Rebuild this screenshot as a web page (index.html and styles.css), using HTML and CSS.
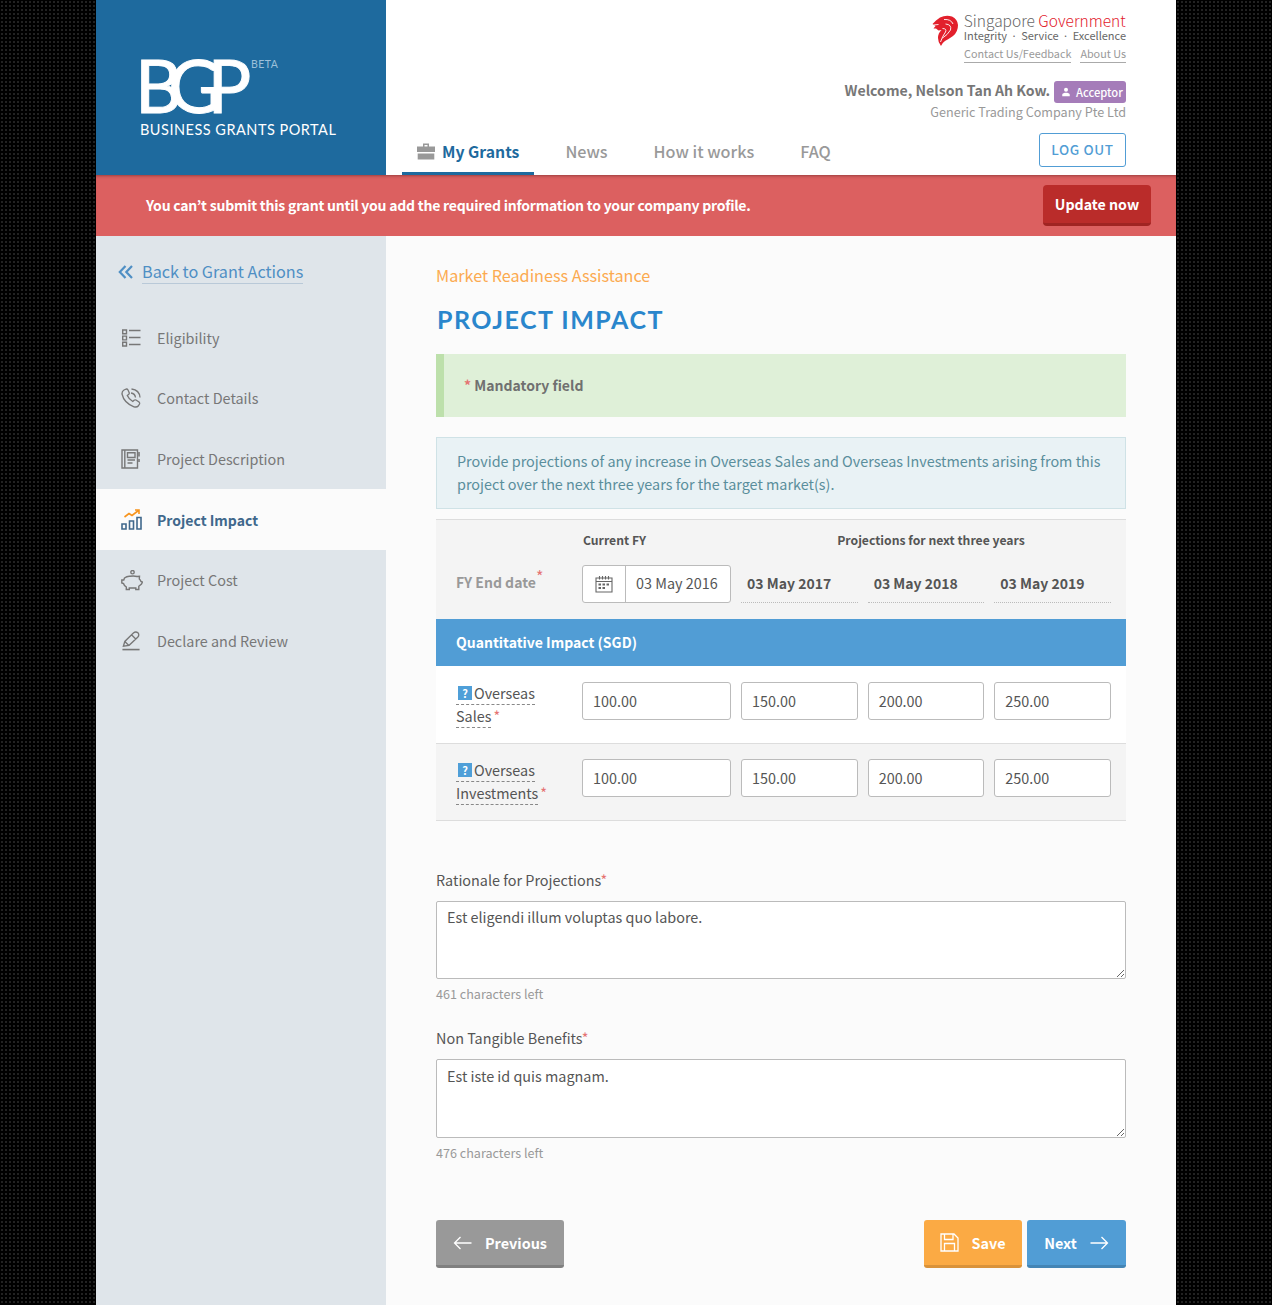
FILE: index.html
```html
<!DOCTYPE html>
<html lang="en">
<head>
<meta charset="utf-8">
<title>Project Impact</title>
<link rel="stylesheet" href="styles.css">
</head>
<body>
<div class="shell">
  <header class="header">
    <div class="brand">
      <div class="brand-mark"><span class="brand-bgp">BGP</span><span class="brand-beta">BETA</span></div>
      <div class="brand-name">BUSINESS GRANTS PORTAL</div>
    </div>
    <div class="header-main">
      <div class="gov">
        <svg class="lion" viewBox="0 0 26 31"><path fill="#e2202c" d="M0.500 9 L4 5.500 L8 2.500 Q14 -0.500 20 1.500 Q25.500 4 26 10 Q26 17 21 21 Q16 24.500 13 26 Q10 28 9 31 Q6 27.500 6 23 Q6 18 9.500 15 L6.500 15.500 L4 13.500 L1.500 13.500 L3.500 11 Z"/><path fill="none" stroke="#fff" stroke-width=".9" d="M1.500 10 L6.500 9.500 M12 4.500 Q19 4 21 9 M13.500 9 Q20 9.500 18.500 15 Q15.500 20 10.500 23 M10.500 13.500 Q15 13.500 13.500 17 Q10.500 21 8.500 27"/></svg>
        <div class="gov-text">
          <div class="gov-title">Singapore <span class="gov-red">Government</span></div>
          <div class="gov-sub">Integrity · Service · Excellence</div>
        </div>
      </div>
      <div class="gov-links"><a class="gov-link">Contact Us/Feedback</a><a class="gov-link">About Us</a></div>
      <div class="welcome">
        <span class="welcome-name">Welcome, Nelson Tan Ah Kow.</span>
        <span class="role"><svg class="role-icon" viewBox="0 0 12 12"><circle cx="6" cy="3.4" r="2.4" fill="#fff"/><path fill="#fff" d="M1.5 11 V9.2 C1.5 7.6 4 6.9 6 6.9 S10.500 7.600 10.500 9.200 V11Z"/></svg>Acceptor</span>
      </div>
      <div class="company">Generic Trading Company Pte Ltd</div>
      <div class="nav-row">
        <nav class="nav">
          <a class="nav-item nav-active"><svg class="nav-icon" viewBox="0 0 18 17"><path fill="#999" d="M6 0.500 H12 V3.500 H18 V9 H0 V3.500 H6Z M7.500 2 V3.500 H10.500 V2Z M0.700 10.500 H17.300 V16.500 H0.700Z" fill-rule="evenodd"/></svg>My Grants</a>
          <a class="nav-item">News</a>
          <a class="nav-item">How it works</a>
          <a class="nav-item">FAQ</a>
        </nav>
        <a class="logout">LOG OUT</a>
      </div>
    </div>
  </header>
  <div class="alert">
    <span class="alert-text">You can’t submit this grant until you add the required information to your company profile.</span>
    <a class="alert-btn">Update now</a>
  </div>
  <div class="body">
    <aside class="side">
      <a class="back"><svg class="back-icon" viewBox="0 0 15 14"><path fill="none" stroke="#4f8fc4" stroke-width="2.200" d="M7.500 1 L1.800 7 L7.500 13 M14 1 L8.300 7 L14 13"/></svg><span class="back-text">Back to Grant Actions</span></a>
      <ul class="steps">
        <li class="step"><svg class="step-icon" viewBox="0 0 20 20" fill="none" stroke="#777" stroke-width="1.400"><path d="M1.700 2h3.800v3.800h-3.800zM1.700 8.100h3.800v3.800h-3.800zM1.700 14.200h3.800v3.800h-3.800z"/><path d="M8 2.500H19.500M8 9.500H19.500M8 16.500H19.500"/></svg>Eligibility</li>
        <li class="step"><svg class="step-icon" viewBox="0 0 20 20" fill="none" stroke="#777" stroke-width="1.300"><path d="M3 2 L5.500 1 Q6.500 1 7 2 L8.200 4.800 Q8.500 5.800 7.500 6.500 L6.300 7.400 Q7.800 11 11.800 13.500 L13 12.200 Q14 11.500 15 12 L18 14 Q19 15 18.500 16 L17.200 18 Q16 19.500 13 18.800 Q3 15 1 6 Q0.800 3.500 3 2Z"/><path d="M10 5 Q14 5.500 14.500 9.500 M10.500 1 Q18.500 2 19 9.500"/></svg>Contact Details</li>
        <li class="step"><svg class="step-icon" viewBox="0 0 20 20" fill="none" stroke="#777" stroke-width="1.400"><path d="M1 1h15.500v18h-15.500zM3.800 1v18"/><path d="M6.500 3.800h7.500v4.700h-7.500zM6.500 11h7.500M6.500 14h5"/><path d="M18 3v4.500M18 10v3" stroke-width="1.600"/></svg>Project Description</li>
        <li class="step step-active"><svg class="step-icon step-icon-wide" viewBox="0 0 22 21" fill="none"><path stroke="#f7941d" stroke-width="1.600" d="M3.500 8 L8 4.500 L11 6.500 L17.500 1.500 M14 1 H18 V5"/><path stroke="#40688c" stroke-width="1.600" d="M1 15h4v5h-4zM8.500 12h4v8h-4zM16 8.500h4v11.500h-4z"/></svg>Project Impact</li>
        <li class="step"><svg class="step-icon step-icon-wide" viewBox="0 0 22 21" fill="none" stroke="#777" stroke-width="1.400"><circle cx="11.500" cy="2.200" r="1.700"/><path d="M3.500 8 Q6 6 9 6.300 Q13 5.700 16 6.500 L18.500 6.300 L18.300 9 Q19.500 10 20 11.500 L21.500 12 L20.500 14 L17.800 16.300 V19.500 H14.800 V18 H8.300 V19.500 H5.300 V17 Q3 15.500 2.500 13.500 L0.800 13 V10 H2.800Z"/></svg>Project Cost</li>
        <li class="step"><svg class="step-icon" viewBox="0 0 20 21" fill="none" stroke="#777" stroke-width="1.400"><path d="M2 16 L3.500 11 L12.500 2 Q15 0 17.500 2 Q19 4.500 17 6.500 L8 15 Z M3.500 11 L7.500 15 M10.500 4 L15 8.500"/><path d="M1 19.500H19" stroke-width="1.700"/></svg>Declare and Review</li>
      </ul>
    </aside>
    <main class="main">
      <div class="eyebrow">Market Readiness Assistance</div>
      <h1 class="title">PROJECT IMPACT</h1>
      <div class="mandatory"><span class="req">*</span> Mandatory field</div>
      <div class="info">Provide projections of any increase in Overseas Sales and Overseas Investments arising from this project over the next three years for the target market(s).</div>
      <section class="table">
        <div class="grid grid-head">
          <div></div>
          <div class="col-head col-current">Current FY</div>
          <div class="col-head col-proj">Projections for next three years</div>
          <div class="fy-label">FY End date<sup class="req req-sup">*</sup></div>
          <div class="date-field">
            <span class="date-cal"><svg class="cal-icon" viewBox="0 0 18 18" fill="none" stroke="#666" stroke-width="1.100"><path d="M1 3h16v14h-16zM1 6.500h16M4.500 1v3.500M7.500 1v3.500M10.500 1v3.500M13.500 1v3.500"/><path stroke-width="2" d="M3.500 9.500h2.500M7.500 9.500h2.500M11.500 9.500h2.500M3.500 13h2.500M7.500 13h2.500"/></svg></span>
            <span class="date-val">03 May 2016</span>
          </div>
          <div class="date-static">03 May 2017</div>
          <div class="date-static">03 May 2018</div>
          <div class="date-static">03 May 2019</div>
        </div>
        <div class="band">Quantitative Impact (SGD)</div>
        <div class="grid grid-row row-white">
          <div class="row-label"><span class="dash"><span class="q">?</span>Overseas Sales</span><span class="req req-row">*</span></div>
          <div class="num">100.00</div><div class="num">150.00</div><div class="num">200.00</div><div class="num">250.00</div>
        </div>
        <div class="grid grid-row row-grey">
          <div class="row-label"><span class="dash"><span class="q">?</span>Overseas Investments</span><span class="req req-row">*</span></div>
          <div class="num">100.00</div><div class="num">150.00</div><div class="num">200.00</div><div class="num">250.00</div>
        </div>
      </section>
      <div class="field field-first">
        <label class="field-label">Rationale for Projections<span class="req">*</span></label>
        <textarea class="area">Est eligendi illum voluptas quo labore.</textarea>
        <div class="hint">461 characters left</div>
      </div>
      <div class="field">
        <label class="field-label">Non Tangible Benefits<span class="req">*</span></label>
        <textarea class="area area-tall">Est iste id quis magnam.</textarea>
        <div class="hint">476 characters left</div>
      </div>
      <div class="actions">
        <a class="btn btn-grey"><svg class="btn-arrow" viewBox="0 0 19 14" fill="none" stroke="#fff" stroke-width="1.300"><path d="M18.500 7H1.500M7.500 1 L1.500 7 L7.500 13"/></svg>Previous</a>
        <div class="actions-right">
          <a class="btn btn-orange"><svg class="btn-save" viewBox="0 0 19 19" fill="none" stroke="#fff" stroke-width="1.300"><path d="M1 1H14L18 5V18H1ZM4.500 1V6.500H13V1M4.500 18V10.500H14.500V18"/></svg>Save</a>
          <a class="btn btn-blue">Next<svg class="btn-arrow btn-arrow-r" viewBox="0 0 19 14" fill="none" stroke="#fff" stroke-width="1.300"><path d="M0.500 7H17.500M11.500 1 L17.500 7 L11.500 13"/></svg></a>
        </div>
      </div>
    </main>
  </div>
</div>
</body>
</html>
```
FILE: styles.css
```css
* { box-sizing: border-box; }
html, body { margin: 0; padding: 0; }
body {
  background-color: #000;
  background-image: radial-gradient(circle at 2px 2px, #222 0.8px, transparent 1px);
  background-size: 4px 4px;
  font-family: "Noto Sans CJK KR", "Noto Sans", sans-serif;
  font-size: 14.4px;
  line-height: 23px;
  color: #555;
}
a { text-decoration: none; color: inherit; }
.shell { width: 1080px; margin: 0 auto; min-height: 1305px; display: flex; flex-direction: column; }

.header { display: flex; height: 175px; background: #fff; }
.brand { width: 290px; background: #1e6a9e; padding: 51px 0 0 44px; color: #fff; }
.brand-mark { display: flex; align-items: flex-start; height: 70px; }
.brand-bgp { font-family: Lato, sans-serif; font-weight: 400; font-size: 73px; line-height: 68px; letter-spacing: -14px; -webkit-text-stroke: .9px #fff; width: 111px; margin-left: -5px; padding-right: 5px; flex: none; color: #fff; }
.brand-beta { font-family: Lato, sans-serif; font-size: 10.500px; line-height: 12px; letter-spacing: .5px; color: #9cc0da; margin-top: 7px; margin-left: 5px; }
.brand-name { font-family: Lato, sans-serif; font-size: 14.500px; line-height: 18px; letter-spacing: .5px; white-space: nowrap; }

.header-main { flex: 1; padding: 12px 50px 0 16px; display: flex; flex-direction: column; align-items: flex-end; }
.gov { display: flex; gap: 6px; align-items: flex-start; }
.lion { width: 26px; height: 31px; margin-top: 3px; }
.gov-title { font-size: 15.500px; line-height: 17px; color: #666; font-weight: 300; white-space: nowrap; }
.gov-red { color: #e2202c; }
.gov-sub { font-size: 11px; line-height: 13px; color: #666; margin-top: 0; word-spacing: 1.500px; white-space: nowrap; }
.gov-links { display: flex; gap: 9px; margin-top: 0; font-size: 10.800px; line-height: 15px; color: #999; }
.gov-link { border-bottom: 1px solid #aaa; display: block; padding-bottom: 1px; }
.welcome { display: flex; align-items: center; gap: 4px; margin-top: 18px; height: 22px; }
.welcome-name { font-size: 14.100px; font-weight: 700; color: #777; margin-bottom: 4px; }
.role { display: flex; align-items: center; height: 22px; width: 72px; padding-left: 7px; background: #a57cb9; color: #fff; border-radius: 3px; font-size: 11.200px; font-weight: 500; }
.role-icon { width: 10px; height: 10px; margin-right: 5px; }
.company { font-size: 12.600px; line-height: 18px; color: #999; margin-top: 0; }
.nav-row { margin-top: auto; align-self: stretch; display: flex; justify-content: space-between; align-items: flex-end; height: 42px; }
.nav { display: flex; gap: 18px; height: 42px; }
.nav-item { display: flex; align-items: center; padding: 0 14px 2px; height: 42px; color: #999; font-size: 16.200px; font-weight: 500; border-bottom: 3px solid transparent; }
.nav-active { color: #1e6a9e; border-bottom-color: #1e6a9e; font-weight: 700; font-size: 15.750px; padding-right: 15px; margin-right: -1px; }
.nav-icon { width: 18px; height: 17px; margin: 0 7px 0 1px; }
.logout { display: flex; align-items: center; justify-content: center; width: 87px; height: 34px; margin-bottom: 8px; padding-bottom: 2px; border: 1px solid #519dd5; border-radius: 3px; color: #519dd5; font-size: 13.500px; font-weight: 500; letter-spacing: .6px; }

.alert { height: 61px; background: #dc6060; box-shadow: inset 0 3px 3px -2px rgba(90, 30, 30, .5); display: flex; align-items: center; justify-content: space-between; padding: 0 25px 0 50px; }
.alert-text { color: #fff; font-size: 14px; font-weight: 700; letter-spacing: -.22px; }
.alert-btn { display: flex; align-items: center; justify-content: center; width: 108px; height: 41px; background: #ba2c2a; border-bottom: 3px solid #a02422; border-radius: 4px; color: #fff; font-weight: 700; font-size: 14.200px; }

.body { flex: 1; display: flex; }
.side { width: 290px; background: #dfe5ea; padding: 24px 0 0 22px; }
.back { display: flex; align-items: center; color: #4f8fc4; font-size: 16.200px; line-height: 24px; height: 24px; }
.back-icon { width: 15px; height: 14px; margin-right: 9px; }
.back-text { border-bottom: 1px solid #b9c9d8; line-height: 23px; height: 24px; }
.steps { list-style: none; margin: 23.45px 0 0 -22px; padding: 0; }
.step { display: flex; align-items: center; height: 60.600px; padding-left: 25px; color: #777; font-size: 14.400px; line-height: 22px; }
.step-active { background: #fbfbfb; color: #40688c; font-weight: 700; font-size: 14px; }
.step-icon { width: 20px; height: 20px; margin-right: 16px; flex: none; }
.step-icon-wide { width: 22px; height: 21px; margin-right: 14px; }

.main { flex: 1; background: #fbfbfb; padding: 27px 50px 37px; display: flex; flex-direction: column; }
.eyebrow { color: #fbaa50; font-size: 16.200px; line-height: 24px; }
.title { margin: 15px 0 18px; font-family: Lato, sans-serif; font-weight: 700; font-size: 25px; line-height: 34px; letter-spacing: 1.500px; color: #2a86cc; padding-left: 1px; }
.mandatory { height: 63px; background: #dff0d8; border-left: 8px solid #bde0ab; padding: 20px 0 0 20px; color: #707070; font-weight: 700; font-size: 14px; }
.req { color: #e57373; }
.info { margin-top: 20px; height: 72px; padding: 11px 20px 0; background: #e9f2f5; border: 1px solid #cfe2e6; color: #5a8e9c; font-size: 14.400px; }
.table { margin-top: 10px; border-top: 1px solid #ddd; border-bottom: 1px solid #ddd; }
.grid { display: grid; grid-template-columns: 116px 149px 1fr 1fr 1fr; column-gap: 10px; padding: 0 15px 0 20px; }
.grid-head { background: #f4f4f4; height: 99px; padding-top: 8px; grid-template-rows: 24px 38px; row-gap: 13px; }
.col-head { font-size: 12.200px; font-weight: 700; color: #555; line-height: 24px; }
.col-current { padding-left: 1px; }
.col-proj { grid-column: 3 / span 3; text-align: center; padding-left: 10px; }
.fy-label { color: #999; font-weight: 700; font-size: 14px; line-height: 34px; white-space: nowrap; }
.req-sup { font-size: 16px; line-height: 0; vertical-align: 5px; font-weight: 400; }
.date-field { display: flex; height: 38px; background: #fff; border: 1px solid #bbb; border-radius: 3px; }
.date-cal { width: 43px; flex: none; border-right: 1px solid #bbb; display: flex; align-items: center; justify-content: center; }
.cal-icon { width: 18px; height: 18px; }
.date-val { padding: 0 10px; line-height: 33px; color: #555; white-space: nowrap; font-size: 14.400px; }
.date-static { height: 38px; border-bottom: 1px dotted #bbb; padding: 0 0 0 6px; line-height: 36px; font-weight: 700; color: #555; white-space: nowrap; font-size: 14px; }
.band { height: 47px; background: #519dd5; color: #fff; font-weight: 700; font-size: 14px; padding: 0 20px; line-height: 47px; }
.grid-row { padding-top: 16px; height: 78px; }
.row-white { background: #fff; border-bottom: 1px solid #ddd; }
.row-grey { background: #f4f4f4; height: 76px; padding-top: 15px; }
.row-label { line-height: 23px; margin-top: -1px; color: #555; padding-right: 6px; }
.dash { border-bottom: 1px dashed #888; padding-bottom: 1px; }
.q { display: inline-block; width: 14px; height: 14px; margin: 0 2px; background: #4f9fd8; color: #fff; font-size: 11px; line-height: 14px; text-align: center; font-weight: 700; vertical-align: 1px; }
.req-row { margin-left: 2px; }
.num { height: 38px; background: #fff; border: 1px solid #bbb; border-radius: 3px; padding: 0 10px; line-height: 35px; color: #555; }

.field { display: flex; flex-direction: column; margin-top: 21.5px; }
.field-first { margin-top: 47px; }
.field-label { line-height: 23px; color: #555; }
.area { display: block; width: 690px; height: 78px; margin-top: 10px; padding: 3px 10px; border: 1px solid #bbb; border-radius: 2px; background: #fff; color: #555; font-family: inherit; font-size: 14.400px; line-height: 23px; }
.area-tall { height: 79px; padding-top: 4px; }
.hint { margin-top: 5px; font-size: 12.600px; line-height: 20px; color: #999; }
.actions { margin-top: auto; display: flex; justify-content: space-between; }
.actions-right { display: flex; gap: 5px; }
.btn { display: flex; align-items: center; justify-content: center; height: 48px; border-radius: 3px; color: #fff; font-weight: 700; font-size: 14.400px; border-bottom: 3px solid; }
.btn-grey { width: 128px; background: #999; border-color: #808080; }
.btn-orange { width: 98px; background: #fbaa44; border-color: #d9923a; }
.btn-blue { width: 99px; background: #519dd5; border-color: #4485b5; }
.btn-arrow { width: 19px; height: 14px; margin-right: 13px; }
.btn-arrow-r { margin: 0 0 0 13px; }
.btn-save { width: 19px; height: 19px; margin-right: 12px; }
```
